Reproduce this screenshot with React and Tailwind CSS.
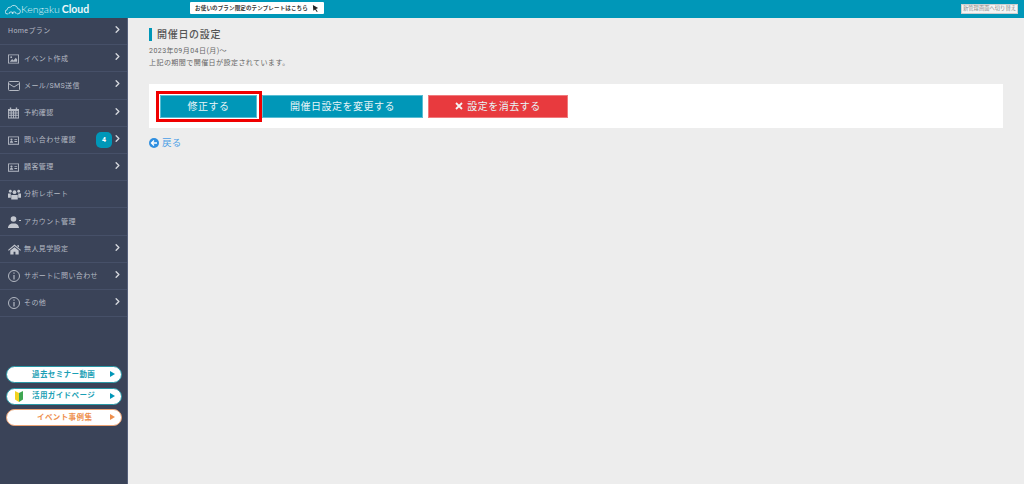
import { ChevronRight } from "lucide-react";

const jp = "font-['Roboto','Noto_Sans_CJK_JP',sans-serif]";

const icons = {
  image: (
    <svg viewBox="0 0 12 10" className="w-[11px] h-[10px]" fill="#b4b9c3">
      <path fillRule="evenodd" d="M0 0h12v10H0zM1 1v8h10V1z" />
      <path d="M2 8l2.500-3 1.500 1.500L8.500 3.500 10 5.500V8z" />
      <circle cx="3.500" cy="3" r="1" />
    </svg>
  ),
  mail: (
    <svg viewBox="0 0 12 10" className="w-[12px] h-[10px]" fill="none" stroke="#b4b9c3" strokeWidth="1">
      <rect x="0.500" y="0.500" width="11" height="9" rx="1" />
      <path d="M0.500 2.500L6 6l5.500-3.500" />
    </svg>
  ),
  calendar: (
    <svg viewBox="0 0 12 12" className="w-[11px] h-[12px]" fill="#b4b9c3">
      <path d="M2 0h1.500v2H2zM8.500 0H10v2H8.500z" />
      <path fillRule="evenodd" d="M0 1.500h12V12H0zM1 4v1.500h2V4zM4 4v1.500h1.500V4zM6.500 4v1.500H8V4zM9 4v1.500h2V4zM1 6.500V8h2V6.500zM4 6.500V8h1.500V6.500zM6.500 6.500V8H8V6.500zM9 6.500V8h2V6.500zM1 9v2h2V9zM4 9v2h1.500V9zM6.500 9v2H8V9zM9 9v2h2V9z" />
    </svg>
  ),
  card: (
    <svg viewBox="0 0 12 9" className="w-[11px] h-[9px]" fill="#b4b9c3">
      <path fillRule="evenodd" d="M0 0h12v9H0zM1 1v7h10V1z" />
      <circle cx="3.800" cy="3.500" r="1.200" />
      <path d="M2 7c0-3 3.600-3 3.600 0zM7 3h3v1H7zM7 5h3v1H7z" />
    </svg>
  ),
  users: (
    <svg viewBox="0 0 14 11" className="w-[13px] h-[11px]" fill="#c3c7cf">
      <circle cx="7" cy="3" r="2" />
      <circle cx="2.500" cy="2" r="1.500" />
      <circle cx="11.500" cy="2" r="1.500" />
      <path d="M3.500 6h7v5h-7zM0 4.500h3v4.500H0zM11 4.500h3v4.500h-3z" />
    </svg>
  ),
  user: (
    <svg viewBox="0 0 13 12" className="w-[13px] h-[12px]" fill="#c3c7cf">
      <circle cx="5.500" cy="3" r="2.800" />
      <path d="M0 12c0-1 .5-3.500 3.500-4.500h4C10.500 8.500 11 11 11 12zM11 4h2v1h-2z" />
    </svg>
  ),
  home: (
    <svg viewBox="0 0 14 11" className="w-[13px] h-[11px]" fill="#c3c7cf">
      <path d="M7 0l7 6-.8.800L7 1.600.8 6.800 0 6z" />
      <path d="M2.500 6.500L7 3l4.500 3.500V11H8V8H6v3H2.500zM10 .8h1.800v2.500L10 2z" />
    </svg>
  ),
  info: (
    <svg viewBox="0 0 12 12" className="w-[12px] h-[12px]" fill="none" stroke="#b4b9c3" strokeWidth="1">
      <circle cx="6" cy="6" r="5.500" />
      <path d="M6 5v4.500M6 2.500v1.300" strokeWidth="1.200" />
    </svg>
  ),
};

const menu = [
  { label: "Homeプラン", arrow: true },
  { label: "イベント作成", icon: "image", arrow: true },
  { label: "メール/SMS送信", icon: "mail", arrow: true },
  { label: "予約確認", icon: "calendar", arrow: true },
  { label: "問い合わせ確認", icon: "card", arrow: true, badge: 4 },
  { label: "顧客管理", icon: "card", arrow: true },
  { label: "分析レポート", icon: "users" },
  { label: "アカウント管理", icon: "user" },
  { label: "無人見学設定", icon: "home", arrow: true },
  { label: "サポートに問い合わせ", icon: "info", arrow: true },
  { label: "その他", icon: "info", arrow: true },
];

function SideLink({ label, color, border, arrow, leaf, pad }) {
  return (
    <div className={`relative h-[17px] w-[116px] rounded-full bg-white border-[1.500px] flex items-center ${border}`}>
      {leaf && (
        <svg viewBox="0 0 8 11" className="absolute left-[8px] top-[2px] w-[8px] h-[11px]">
          <path d="M0 0l4 2v9L0 8.500z" fill="#f2d21f" />
          <path d="M8 0L4 2v9l4-2.500z" fill="#3fa652" />
        </svg>
      )}
      <span className={`text-[7.500px] font-bold tracking-[0.4px] whitespace-nowrap ${color} ${pad}`}>{label}</span>
      <span className={`absolute right-[6px] top-[4px] w-0 h-0 border-y-[3.500px] border-y-transparent border-l-[5px] ${arrow}`} />
    </div>
  );
}

function Logo() {
  return (
    <div className="flex items-center pl-[5px] text-white">
      <svg viewBox="0 0 20 12" className="w-[16px] h-[11px]" fill="none" stroke="#e6f4f8" strokeWidth="1">
        <path d="M4 11.500H3a2.500 2.500 0 0 1-.5-5A4 4 0 0 1 7 3a5 5 0 0 1 9 2 3.200 3.200 0 0 1 0 6.500h-1" />
        <path d="M5 11.500a2.500 2.500 0 0 1 5 0M9 11.500a2.500 2.500 0 0 1 5 0" />
      </svg>
      <span className="text-[10.500px] font-['Lato',sans-serif] font-light leading-none text-[#dff2f6]">Kengaku</span>
      <span className="text-[10.500px] font-['Lato',sans-serif] font-bold leading-none ml-[2px] text-[#eef8fa]">Cloud</span>
    </div>
  );
}

function Btn({ className, children }) {
  return (
    <div className={`h-[23px] border flex items-center justify-center text-[10px] text-[#e6f4f7] tracking-[0.5px] whitespace-nowrap ${className}`}>
      {children}
    </div>
  );
}

export default function App() {
  return (
    <div className={`w-[1024px] h-[484px] overflow-hidden flex flex-col bg-[#ededed] ${jp}`}>
      <header className="relative h-[18px] shrink-0 bg-[#0097b8] flex items-center justify-between">
        <Logo />
        <div className="absolute left-[190px] top-[2px] w-[134px] h-[12px] bg-white rounded-[1px] flex items-center justify-center gap-[4px]">
          <span className="text-[5.500px] font-bold text-[#333] whitespace-nowrap tracking-[0.15px]">お使いのプラン限定のテンプレートはこちら</span>
          <svg viewBox="0 0 8 8" className="w-[7px] h-[7px]" fill="#222">
            <path d="M1 0l6 3.500-2.500 1L6.500 7.500 5.500 8 3.500 5 1.500 6.500z" />
          </svg>
        </div>
        <div className="mr-[6px] w-[57px] h-[10px] bg-[#f4f4f4] border border-[#cfcfcf] flex items-center justify-center">
          <span className="text-[5.300px] text-[#888] whitespace-nowrap">新管理画面へ切り替え</span>
        </div>
      </header>

      <div className="flex flex-1 min-h-0">
        <aside className="w-[128px] shrink-0 bg-[#3a4358] border-r border-[#56607a] flex flex-col">
          <nav>
            {menu.map((m) => (
              <div key={m.label} className="relative h-[27.200px] border-b border-[#465068] flex items-center pl-[8px] pr-[7px] pt-[1px]">
                {m.icon && <span className="w-[16px] flex items-center shrink-0">{icons[m.icon]}</span>}
                <span className="text-[7px] text-[#b4b9c3] whitespace-nowrap tracking-[0.4px]">{m.label}</span>
                {m.badge && (
                  <span className="absolute right-[15px] top-[5px] w-[16px] h-[16px] rounded-[5px] bg-[#0097b8] text-white text-[7px] font-bold flex items-center justify-center">
                    {m.badge}
                  </span>
                )}
                {m.arrow && <ChevronRight className="absolute right-[4px] top-[5px] w-[11px] h-[13px] text-[#d4d7dd]" strokeWidth={3} />}
              </div>
            ))}
          </nav>
          <div className="mt-[49px] pl-[6px] flex flex-col gap-[4.500px]">
            <SideLink label="過去セミナー動画" color="text-[#1a9fb5]" border="border-[#2a98a6]" arrow="border-l-[#0097b8]" pad="pl-[25px]" />
            <SideLink label="活用ガイドページ" color="text-[#1a9fb5]" border="border-[#2a98a6]" arrow="border-l-[#0097b8]" pad="pl-[25px]" leaf />
            <SideLink label="イベント事例集" color="text-[#ee8f4e]" border="border-[#eca273]" arrow="border-l-[#ee8f4e]" pad="pl-[30px]" />
          </div>
        </aside>

        <main className="flex-1 pl-[21px] pr-[21px] pt-[10px]">
          <h1 className="h-[13px] border-l-[3px] border-[#0097b8] pl-[5px] flex items-center text-[10px] font-medium text-[#555] tracking-[0.7px]">
            開催日の設定
          </h1>
          <div className="mt-[5px] text-[7px] leading-[11.500px] text-[#666] tracking-[0.45px]">
            <p>2023年09月04日(月)～</p>
            <p>上記の期間で開催日が設定されています。</p>
          </div>
          <section className="mt-[15px] h-[44px] bg-white flex items-center pl-[11px] gap-[5px]">
            <div className="relative">
              <Btn className="w-[97px] bg-[#0097b8] border-[#59bdd3]">修正する</Btn>
              <div className="absolute -left-[4px] -top-[4px] w-[106px] h-[31px] border-[3px] border-[#f00000] pointer-events-none" />
            </div>
            <Btn className="w-[161px] bg-[#0097b8] border-[#59bdd3]">開催日設定を変更する</Btn>
            <Btn className="w-[140px] bg-[#e83a3e] border-[#f07a7d] gap-[4px]">
              <svg viewBox="0 0 8 8" className="w-[8px] h-[8px]" fill="none" stroke="#f4f4f4" strokeWidth="1.800">
                <path d="M1 1l6 6M7 1L1 7" />
              </svg>
              設定を消去する
            </Btn>
          </section>
          <div className="mt-[8px] flex items-center gap-[3px]">
            <svg viewBox="0 0 10 10" className="w-[10px] h-[10px]">
              <circle cx="5" cy="5" r="5" fill="#2f8fe0" />
              <path d="M5 2.500L2.500 5 5 7.500M2.800 5H8" fill="none" stroke="#fff" strokeWidth="1.300" />
            </svg>
            <span className="text-[9.500px] text-[#4a9ee6] tracking-[0.3px]">戻る</span>
          </div>
        </main>
      </div>
    </div>
  );
}
